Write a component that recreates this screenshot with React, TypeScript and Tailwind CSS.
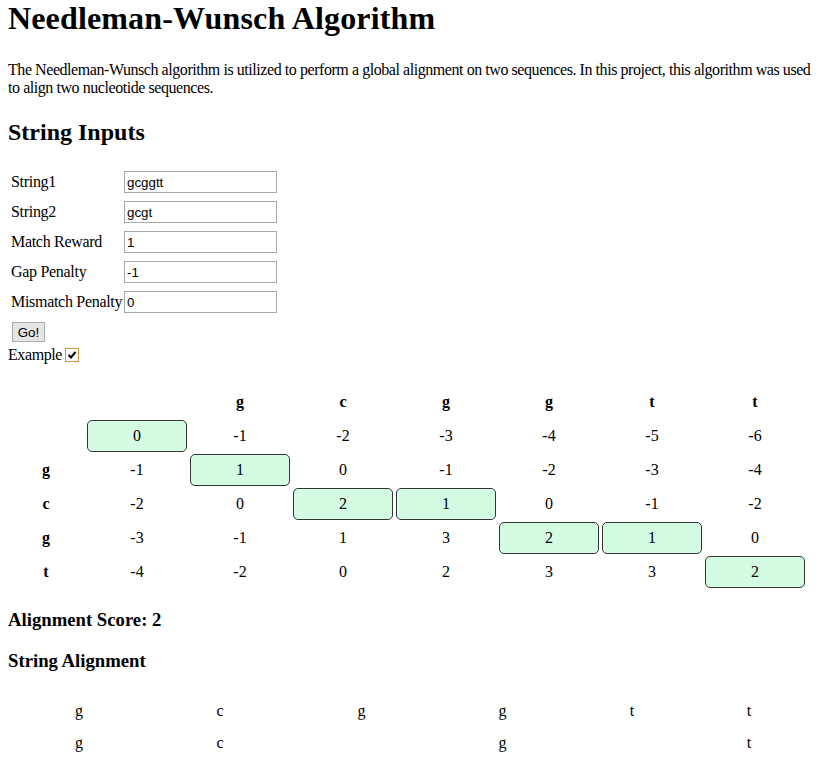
import React from "react";

const cols = ["g", "c", "g", "g", "t", "t"];
const rows = ["g", "c", "g", "t"];
const matrix: number[][] = [
  [0, -1, -2, -3, -4, -5, -6],
  [-1, 1, 0, -1, -2, -3, -4],
  [-2, 0, 2, 1, 0, -1, -2],
  [-3, -1, 1, 3, 2, 1, 0],
  [-4, -2, 0, 2, 3, 3, 2],
];
const path = new Set(["0-0", "1-1", "2-2", "2-3", "3-4", "3-5", "4-6"]);

const alignTop = ["g", "c", "g", "g", "t", "t"];
const alignBottom = ["g", "c", "", "g", "", "t"];
const alignWidths = ["w-[142px]", "w-[140px]", "w-[143px]", "w-[139px]", "w-[120px]", "w-[114px]"];

const inputs: [string, string][] = [
  ["String1", "gcggtt"],
  ["String2", "gcgt"],
  ["Match Reward", "1"],
  ["Gap Penalty", "-1"],
  ["Mismatch Penalty", "0"],
];

export default function App() {
  return (
    <div className="bg-white text-black px-[8px] pb-4 font-['Liberation_Serif',serif] text-[16px] leading-[1.15]">
      <h1 className="text-[32px] font-bold leading-[1.15] m-0 tracking-[0.15px]">Needleman-Wunsch Algorithm</h1>
      <p className="mt-[24px] w-[808px] tracking-[-0.44px]">
        <span className="whitespace-nowrap">
          The Needleman-Wunsch algorithm is utilized to perform a global alignment on two sequences. In this project, this algorithm was used
        </span>
        <br />
        to align two nucleotide sequences.
      </p>
      <h2 className="mt-[21px] text-[24px] font-bold leading-[1.15]">String Inputs</h2>

      <div className="mt-[22px] flex flex-col gap-[2px]">
        {inputs.map(([label, val]) => (
          <div key={label} className="flex items-center h-[28px] pl-[3px]">
            <span className="w-[113px] whitespace-nowrap tracking-[-0.3px]">{label}</span>
            <div className="w-[153px] h-[22px] border border-[#a9a9a9] bg-white flex items-center px-[2px] font-['Liberation_Sans',Arial,sans-serif] text-[13.33px] text-black">
              {val}
            </div>
          </div>
        ))}
      </div>
      <div className="mt-[6px] pl-[4px]">
        <button className="h-[20px] w-[33px] border border-[#adadad] bg-[#e5e5e5] font-['Liberation_Sans',Arial,sans-serif] text-[13.33px] leading-none flex items-center justify-center">
          Go!
        </button>
      </div>
      <div className="mt-[4px] flex items-center h-[18px]">
        <span className="tracking-[-0.4px]">Example</span>
        <span className="ml-[3px] w-[14px] h-[14px] border border-[#c59a3a] bg-white flex items-center justify-center">
          <svg width="10" height="10" viewBox="0 0 10 10">
            <path d="M1.5 5 L4 7.5 L8.5 2" fill="none" stroke="#000" strokeWidth="2" />
          </svg>
        </span>
      </div>

      <div className="mt-[22px] grid grid-cols-[76px_repeat(7,100px)] gap-x-[3px] gap-y-[2px] auto-rows-[32px]">
        <div />
        <div />
        {cols.map((c, i) => (
          <div key={"h" + i} className="flex items-center justify-center font-bold">{c}</div>
        ))}
        {matrix.map((row, r) => (
          <React.Fragment key={"r" + r}>
            <div className="flex items-center justify-center font-bold">{r === 0 ? "" : rows[r - 1]}</div>
            {row.map((v, c) => (
              <div
                key={r + "-" + c}
                className={
                  path.has(r + "-" + c)
                    ? "flex items-center justify-center bg-[#d4fce2] border border-[#333333] rounded-[5px]"
                    : "flex items-center justify-center"
                }
              >
                {v}
              </div>
            ))}
          </React.Fragment>
        ))}
      </div>

      <h3 className="mt-[21px] text-[18.72px] font-bold leading-[1.15]">Alignment Score: 2</h3>
      <h3 className="mt-[19px] text-[18.72px] font-bold leading-[1.15]">String Alignment</h3>

      <div className="mt-[24px] flex flex-col">
        {[alignTop, alignBottom].map((line, li) => (
          <div key={li} className="flex h-[32px] items-center">
            {line.map((ch, i) => (
              <div key={i} className={alignWidths[i] + " text-center"}>{ch}</div>
            ))}
          </div>
        ))}
      </div>
    </div>
  );
}
